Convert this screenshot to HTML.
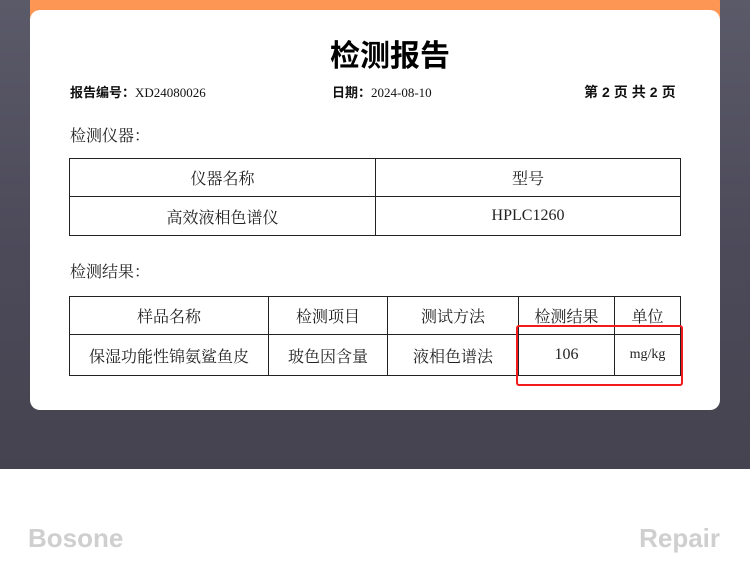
<!DOCTYPE html>
<html><head><meta charset="utf-8"><style>
*{margin:0;padding:0;box-sizing:border-box}
body{width:750px;height:570px;background:#fff;position:relative;overflow:hidden;font-family:"Liberation Serif","Noto Serif CJK SC",serif;color:#111}
.bg{position:absolute;left:0;top:0;width:750px;height:469px;background:linear-gradient(180deg,#5b5a69 0%,#4d4b5a 50%,#45434f 100%)}
.orange{position:absolute;left:30px;top:-10px;width:690px;height:40px;background:#fd9654;border-radius:12px}
.card{position:absolute;left:30px;top:10px;width:690px;height:400px;background:#fff;border-radius:10px}
.t{position:absolute;white-space:nowrap}
table{position:absolute;border-collapse:collapse;font-size:16px;color:#222}
td{border:1.5px solid #222;text-align:center;padding:0}
.brand{position:absolute;top:523px;font-family:"Liberation Sans",sans-serif;font-weight:bold;font-size:26px;color:#cfcfcf;letter-spacing:0px}
</style></head><body>
<div class="bg"></div>
<div class="orange"></div>
<div class="card"></div>
<div class="t" style="left:330px;top:31px;font-size:30px;font-weight:bold;font-family:'Liberation Sans','Noto Sans CJK SC',sans-serif;color:#000">检测报告</div>
<div class="t" style="left:70px;top:82px;font-size:13px"><b style="font-family:'Liberation Sans','Noto Sans CJK SC',sans-serif">报告编号：</b>XD24080026</div>
<div class="t" style="left:332px;top:82px;font-size:13px"><b style="font-family:'Liberation Sans','Noto Sans CJK SC',sans-serif">日期：</b>2024-08-10</div>
<div class="t" style="left:584px;top:82px;font-size:14px;letter-spacing:4px;font-weight:bold;font-family:'Liberation Sans','Noto Sans CJK SC',sans-serif">第2页共2页</div>
<div class="t" style="left:70px;top:123px;font-size:16px;color:#222">检测仪器：</div>
<table style="left:69px;top:158px;width:612px">
<tr style="height:38px"><td style="width:306px">仪器名称</td><td>型号</td></tr>
<tr style="height:39px"><td>高效液相色谱仪</td><td>HPLC1260</td></tr>
</table>
<div class="t" style="left:70px;top:259px;font-size:16px;color:#222">检测结果：</div>
<table style="left:69px;top:296px;width:612px">
<tr style="height:38px"><td style="width:199px">样品名称</td><td style="width:119px">检测项目</td><td style="width:131px">测试方法</td><td style="width:96px">检测结果</td><td>单位</td></tr>
<tr style="height:41px"><td>保湿功能性锦氨鲨鱼皮</td><td>玻色因含量</td><td>液相色谱法</td><td>106</td><td style="font-size:14px">mg/kg</td></tr>
</table>
<div style="position:absolute;left:516px;top:325px;width:167px;height:61px;border:2.5px solid #f21a1a;border-radius:3px"></div>
<div class="brand" style="left:28px">Bosone</div>
<div class="brand" style="right:30px">Repair</div>
</body></html>
